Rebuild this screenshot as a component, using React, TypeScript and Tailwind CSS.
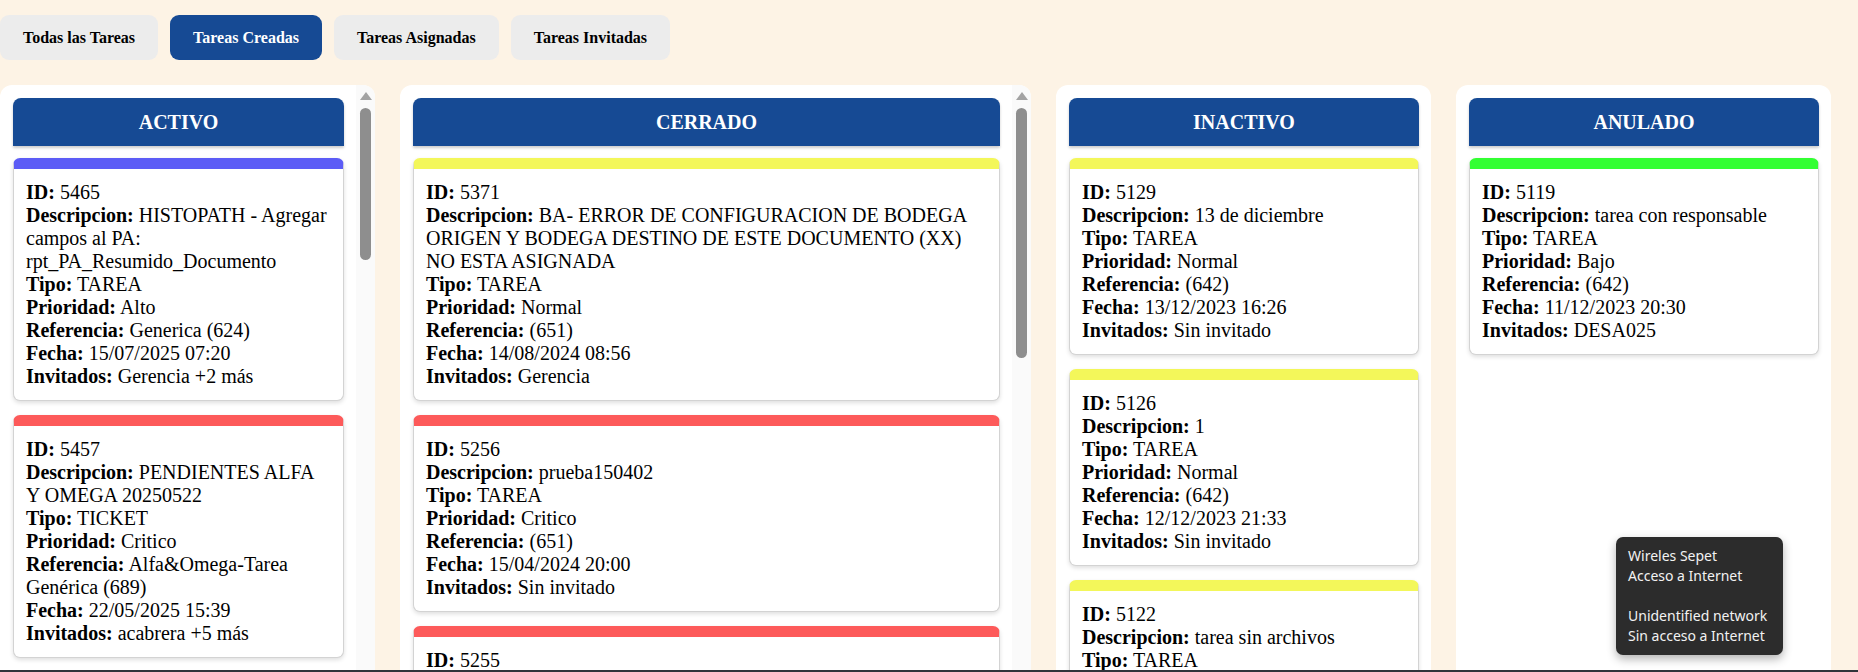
import React from 'react'

type Task = {
  id: number
  desc: string
  tipo: string
  prioridad: string
  referencia: string
  fecha: string
  invitados: string
  bar: string
}

type Column = {
  title: string
  width: string
  tasks: Task[]
  thumb?: string
}

const tabs = ['Todas las Tareas', 'Tareas Creadas', 'Tareas Asignadas', 'Tareas Invitadas']

const purple = 'border-t-[#5c5cf6]'
const red = 'border-t-[#fd5a5a]'
const yellow = 'border-t-[#f3f75a]'
const green = 'border-t-[#33ff33]'

// line breaks follow the wrapping of the original board
const columns: Column[] = [
  {
    title: 'ACTIVO',
    width: 'w-[375px]',
    thumb: 'h-[152px]',
    tasks: [
      { id: 5465, desc: 'HISTOPATH - Agregar\ncampos al PA:\nrpt_PA_Resumido_Documento', tipo: 'TAREA', prioridad: 'Alto', referencia: 'Generica (624)', fecha: '15/07/2025 07:20', invitados: 'Gerencia +2 más', bar: purple },
      { id: 5457, desc: 'PENDIENTES ALFA\nY OMEGA 20250522', tipo: 'TICKET', prioridad: 'Critico', referencia: 'Alfa&Omega-Tarea\nGenérica (689)', fecha: '22/05/2025 15:39', invitados: 'acabrera +5 más', bar: red },
      { id: 5449, desc: 'Revision de reportes\nmensuales', tipo: 'TAREA', prioridad: 'Normal', referencia: 'Generica (624)', fecha: '12/05/2025 10:12', invitados: 'Sin invitado', bar: yellow },
    ],
  },
  {
    title: 'CERRADO',
    width: 'w-[631px]',
    thumb: 'h-[250px]',
    tasks: [
      { id: 5371, desc: 'BA- ERROR DE CONFIGURACION DE BODEGA\nORIGEN Y BODEGA DESTINO DE ESTE DOCUMENTO (XX)\nNO ESTA ASIGNADA', tipo: 'TAREA', prioridad: 'Normal', referencia: '(651)', fecha: '14/08/2024 08:56', invitados: 'Gerencia', bar: yellow },
      { id: 5256, desc: 'prueba150402', tipo: 'TAREA', prioridad: 'Critico', referencia: '(651)', fecha: '15/04/2024 20:00', invitados: 'Sin invitado', bar: red },
      { id: 5255, desc: 'prueba150401', tipo: 'TAREA', prioridad: 'Critico', referencia: '(651)', fecha: '15/04/2024 19:41', invitados: 'Sin invitado', bar: red },
    ],
  },
  {
    title: 'INACTIVO',
    width: 'w-[375px]',
    tasks: [
      { id: 5129, desc: '13 de diciembre', tipo: 'TAREA', prioridad: 'Normal', referencia: '(642)', fecha: '13/12/2023 16:26', invitados: 'Sin invitado', bar: yellow },
      { id: 5126, desc: '1', tipo: 'TAREA', prioridad: 'Normal', referencia: '(642)', fecha: '12/12/2023 21:33', invitados: 'Sin invitado', bar: yellow },
      { id: 5122, desc: 'tarea sin archivos', tipo: 'TAREA', prioridad: 'Normal', referencia: '(642)', fecha: '12/12/2023 09:05', invitados: 'Sin invitado', bar: yellow },
    ],
  },
  {
    title: 'ANULADO',
    width: 'w-[375px]',
    tasks: [
      { id: 5119, desc: 'tarea con responsable', tipo: 'TAREA', prioridad: 'Bajo', referencia: '(642)', fecha: '11/12/2023 20:30', invitados: 'DESA025', bar: green },
    ],
  },
]

function TaskCard({ t }: { t: Task }) {
  const rows: [string, string][] = [
    ['ID:', String(t.id)],
    ['Descripcion:', t.desc],
    ['Tipo:', t.tipo],
    ['Prioridad:', t.prioridad],
    ['Referencia:', t.referencia],
    ['Fecha:', t.fecha],
    ['Invitados:', t.invitados],
  ]
  return (
    <div className={`bg-white rounded-[7px] border border-[#d3d3d3] border-t-[11px] ${t.bar} shadow-[0_2px_4px_rgba(0,0,0,0.13)] px-[12px] pt-[12px] pb-[12px] text-[20px] leading-[23px] text-black`}>
      {rows.map(([label, value]) => (
        <div key={label} className="whitespace-pre">
          <b>{label}</b> {value}
        </div>
      ))}
    </div>
  )
}

function ScrollRail({ thumb }: { thumb: string }) {
  return (
    <div className="w-[19px] shrink-0 bg-[#fafafa] flex flex-col items-center pt-[7px]">
      <div className="w-0 h-0 border-x-[6px] border-x-transparent border-b-[8px] border-b-[#a3a3a3]" />
      <div className={`mt-[8px] w-[11px] ${thumb} rounded-full bg-[#8e8e8e]`} />
    </div>
  )
}

export default function App() {
  return (
    <div className="relative h-screen overflow-hidden bg-[#fdf3e5] font-['Liberation_Serif','Times_New_Roman',serif]">
      {/* filtros */}
      <div className="flex gap-[12px] pt-[15px]">
        {tabs.map((tab, i) => (
          <button
            key={tab}
            className={`h-[45px] px-[23px] rounded-[9px] text-[16px] font-bold ${i === 1 ? 'bg-[#164a94] text-white' : 'bg-[#ececec] text-black'}`}
          >
            {tab}
          </button>
        ))}
      </div>

      {/* tablero */}
      <div className="flex gap-[25px] mt-[25px]">
        {columns.map((col) => (
          <div key={col.title} className={`${col.width} h-[820px] shrink-0 bg-white rounded-[12px] flex overflow-hidden`}>
            <div className="flex-1 min-w-0 pl-[13px] pr-[12px] pt-[13px] flex flex-col">
              <div className="h-[48px] shrink-0 flex items-center justify-center rounded-t-[8px] bg-[#164a94] text-white text-[20px] font-bold shadow-[0_2px_3px_rgba(0,0,0,0.2)]">
                {col.title}
              </div>
              <div className="flex flex-col gap-[14px] mt-[12px]">
                {col.tasks.map((t) => (
                  <TaskCard key={t.id} t={t} />
                ))}
              </div>
            </div>
            {col.thumb && <ScrollRail thumb={col.thumb} />}
          </div>
        ))}
      </div>

      {/* tooltip de red */}
      <div className="absolute left-[1616px] top-[537px] w-[167px] rounded-[7px] bg-[#2c2c2c] text-[#f2f2f2] pl-[12px] pt-[9px] pb-[9px] text-[14px] leading-[20px] font-['Noto_Sans',sans-serif] shadow-[0_4px_10px_rgba(0,0,0,0.3)]">
        <div>Wireles Sepet</div>
        <div>Acceso a Internet</div>
        <div className="h-[20px]" />
        <div>Unidentified network</div>
        <div>Sin acceso a Internet</div>
      </div>

      <div className="absolute left-0 right-0 bottom-0 h-[2px] bg-[#30343a]" />
    </div>
  )
}
